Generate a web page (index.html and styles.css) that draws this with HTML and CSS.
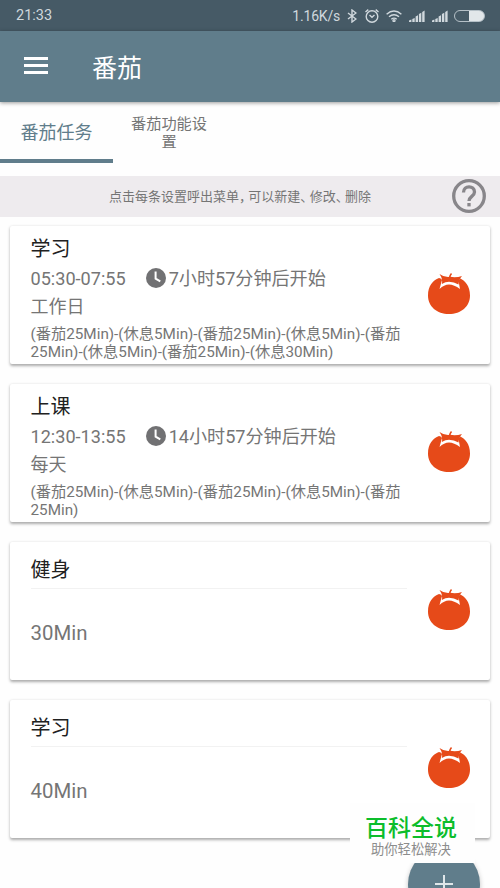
FILE: index.html
```html
<!DOCTYPE html>
<html lang="zh-CN">
    <head>
        <meta charset="UTF-8" />
        <meta name="viewport" content="width=device-width, initial-scale=1.0" />
        <title>番茄</title>
        <link rel="stylesheet" href="styles.css">
    </head>
    <body>
        <svg width="0" height="0" class="symbols">
            <symbol id="tomato" viewBox="0 0 44 44">
                <path fill="#e64a19" d="M22 42C10 42 1 34.500 1 23.500C1 14 6 8 12 6L22 9L32 6C38 8 43 14 43 23.500C43 34.500 34 42 22 42Z" />
                <path fill="#fff" d="M9 0L15 8L12.500 17Q17 12.500 22 12.500Q27 12.500 33 17L31.500 9L37 0Z" />
                <path fill="#e64a19" d="M12.500 2Q17 5.500 23 4.800Q29 6 35 4Q32 7 31.500 12.500Q27 9.800 22 9.800Q18.500 9.800 14.800 12Q16 7 12.500 2Z" />
                <path fill="none" stroke="#e64a19" stroke-width="1.600" d="M22.500 6Q23 3 24.500 1.500" />
            </symbol>
            <symbol id="clock" viewBox="0 0 20 20">
                <circle cx="10" cy="10" r="10" fill="#717173" />
                <path fill="none" stroke="#fff" stroke-width="2" d="M9.600 3.500V10.600L14.300 13.300" />
            </symbol>
            <symbol id="signal" viewBox="0 0 16 12">
                <path fill="#d0d8dd" d="M0 12V10.500L2.400 9.500V12ZM3.300 12V9L5.700 8V12ZM6.600 12V6.500L9 5.200V12ZM9.900 12V4L12.300 2.800V12ZM13.200 12V2L15.600 .5V12Z" />
            </symbol>
        </svg>
        <div class="status-bar">
            <span>21:33</span>
            <div class="status-icons">
                <span class="speed">1.16K/s</span>
                <svg class="bluetooth" width="10" height="14" viewBox="0 0 10 14"><path d="M1 4L9 10L5 13V1L9 4L1 10" /></svg>
                <svg class="alarm" width="14" height="14" viewBox="0 0 14 14"><circle cx="7" cy="7.500" r="5.800" /><path d="M.5 3L3.300 .6M13.500 3L10.700 .6M4.500 6L7 8.200L9.500 6" /></svg>
                <svg class="wifi" width="16" height="12" viewBox="0 0 16 12"><path d="M.6 4.200Q8-2.200 15.400 4.200M3 6.800Q8 2.500 13 6.800M5.300 9.200Q8 7 10.700 9.200" /><circle cx="8" cy="10.600" r="1" /></svg>
                <svg class="signal" width="16" height="12"><use href="#signal" /></svg>
                <svg class="signal" width="16" height="12"><use href="#signal" /></svg>
                <span class="battery"></span>
            </div>
        </div>
        <header>
            <div class="menu"><i></i><i></i><i></i></div>
            <h1>番茄</h1>
        </header>
        <nav>
            <div class="tab active">番茄任务</div>
            <div class="tab">番茄功能设置</div>
        </nav>
        <div class="hint">
            <p>点击每条设置呼出菜单<i>，</i>可以新建<i>、</i>修改<i>、</i>删除</p>
            <svg width="36" height="36" viewBox="0 0 36 36">
                <circle cx="18" cy="18" r="15.300" />
                <path d="M12.500 14.500C12.500 7 23.500 7 23.500 14C23.500 18.500 18 18.300 18 23" />
                <path d="M18 25V28.400" />
            </svg>
        </div>
        <main>
            <div class="card">
                <div class="info">
                    <h2>学习</h2>
                    <div class="time"><span>05:30-07:55</span><svg width="20" height="20"><use href="#clock" /></svg><span class="start">7小时57分钟后开始</span></div>
                    <div class="repeat">工作日</div>
                    <div class="steps">(番茄25Min)-(休息5Min)-(番茄25Min)-(休息5Min)-(番茄<br>25Min)-(休息5Min)-(番茄25Min)-(休息30Min)</div>
                </div>
                <svg class="tomato" width="44" height="44"><use href="#tomato" /></svg>
            </div>
            <div class="card">
                <div class="info">
                    <h2>上课</h2>
                    <div class="time"><span>12:30-13:55</span><svg width="20" height="20"><use href="#clock" /></svg><span class="start">14小时57分钟后开始</span></div>
                    <div class="repeat">每天</div>
                    <div class="steps">(番茄25Min)-(休息5Min)-(番茄25Min)-(休息5Min)-(番茄<br>25Min)</div>
                </div>
                <svg class="tomato" width="44" height="44"><use href="#tomato" /></svg>
            </div>
            <div class="card">
                <div class="info">
                    <h2 class="line">健身</h2>
                    <div class="duration">30Min</div>
                </div>
                <svg class="tomato" width="44" height="44"><use href="#tomato" /></svg>
            </div>
            <div class="card">
                <div class="info">
                    <h2 class="line">学习</h2>
                    <div class="duration">40Min</div>
                </div>
                <svg class="tomato" width="44" height="44"><use href="#tomato" /></svg>
            </div>
        </main>
        <div class="add">
            <svg width="20" height="20" viewBox="0 0 20 20"><path d="M10 1V19M1 10H19" /></svg>
        </div>
        <div class="brand">
            <strong>百科全说</strong>
            <span>助你轻松解决</span>
        </div>
    </body>
</html>
```
FILE: styles.css
```css
* {
    box-sizing: border-box;
}
body {
    position: relative;
    height: 888px;
    margin: 0;
    overflow: hidden;
    background-color: #fefefe;
    color: #757575;
    font-family: Roboto, "Noto Sans CJK SC", sans-serif;
}
h1,
h2,
p {
    margin: 0;
    font-weight: 400;
}
svg {
    display: block;
    flex: none;
}
.symbols {
    position: absolute;
}
.status-bar {
    display: flex;
    height: 31px;
    padding: 0 15px 0 16px;
    align-items: center;
    justify-content: space-between;
    background-color: #465a66;
    color: #d0d8dd;
    font-size: 14.5px;
}
.status-icons {
    display: flex;
    align-items: center;
}
.status-icons svg {
    fill: none;
    stroke: #d0d8dd;
    stroke-width: 1.4;
}
.speed {
    font-size: 14px;
    letter-spacing: -0.2px;
}
.status-icons .bluetooth {
    margin-left: 7px;
}
.status-icons .alarm {
    margin-left: 8px;
}
.status-icons .wifi {
    margin-left: 7px;
}
.status-icons .signal {
    margin-left: 7px;
    stroke: none;
}
.battery {
    width: 31px;
    height: 12px;
    margin-left: 6px;
    border: 1px solid #b5c0c7;
    border-radius: 6px;
    background: linear-gradient(#e2e7ea, #e2e7ea) right / 15px 100% no-repeat;
}
header {
    position: relative;
    display: flex;
    height: 71px;
    padding-left: 24px;
    align-items: center;
    background-color: #607d8b;
    box-shadow: 0 1px 4px rgba(0, 0, 0, 0.4);
    color: #fff;
}
.menu {
    display: flex;
    width: 24px;
    flex-direction: column;
    gap: 4px;
    margin-top: -2px;
}
.menu i {
    height: 3px;
    background-color: #fff;
}
h1 {
    margin: -1px 0 0 44px;
    font-size: 25px;
}
nav {
    display: flex;
    height: 61px;
}
.tab {
    display: flex;
    width: 113px;
    padding: 0 18px 0 17px;
    align-items: center;
    justify-content: center;
    font-size: 15.2px;
    line-height: 18px;
    text-align: center;
}
.tab.active {
    padding: 5px 0 0;
    border-bottom: 4px solid #607d8b;
    color: #607d8b;
    font-size: 18px;
}
.hint {
    display: flex;
    height: 41px;
    margin-top: 13px;
    padding: 0 13px 1px 109px;
    align-items: center;
    justify-content: space-between;
    background-color: #eeebee;
    font-size: 13px;
}
.hint p {
    margin-top: -1px;
}
.hint i {
    font-style: normal;
    letter-spacing: -3.7px;
}
.hint svg {
    fill: none;
    stroke: #88868a;
    stroke-width: 3.3;
}
main {
    display: flex;
    flex-direction: column;
    gap: 20px;
    padding: 9px 10px;
}
.card {
    display: flex;
    height: 138px;
    padding: 11px 19px 0 20.5px;
    justify-content: space-between;
    border-radius: 2px;
    background-color: #fff;
    box-shadow: 0 1.5px 3px rgba(0, 0, 0, 0.33);
}
.info {
    width: 376.5px;
    white-space: nowrap;
}
.tomato {
    margin-top: 35px;
}
h2 {
    height: 24px;
    color: #212121;
    font-size: 20px;
    line-height: 24px;
}
h2.line {
    height: 36px;
    padding-top: 5px;
    border-bottom: 1px solid #f2f2f2;
}
.time {
    display: flex;
    height: 32px;
    margin-top: 1px;
    align-items: center;
    font-size: 18.1px;
}
.time svg {
    margin-left: 20px;
}
.start {
    margin: -2px 0 0 3px;
}
.repeat {
    height: 24px;
    margin-top: 1px;
    font-size: 18px;
    line-height: 24px;
}
.steps {
    margin-top: 6px;
    font-size: 15.25px;
    line-height: 18px;
}
.duration {
    padding-top: 32px;
    font-size: 20.4px;
    line-height: 24px;
}
.add {
    position: absolute;
    top: 848px;
    left: 408px;
    display: flex;
    width: 72px;
    height: 72px;
    align-items: center;
    justify-content: center;
    border-radius: 50%;
    background-color: #607d8b;
    box-shadow: 0 2px 5px rgba(0, 0, 0, 0.25);
}
.add svg {
    fill: none;
    stroke: #dfe6e9;
    stroke-width: 2;
}
.brand {
    position: absolute;
    top: 803px;
    left: 350px;
    display: flex;
    width: 125px;
    height: 60px;
    padding: 12px 0 0 15px;
    flex-direction: column;
    background-color: #fefefe;
    white-space: nowrap;
}
.brand strong {
    color: #0cbd2b;
    font-size: 23px;
    font-weight: 500;
    line-height: 27px;
}
.brand span {
    margin-left: 6px;
    color: #8c8c8c;
    font-size: 13.3px;
    line-height: 16px;
}
```
